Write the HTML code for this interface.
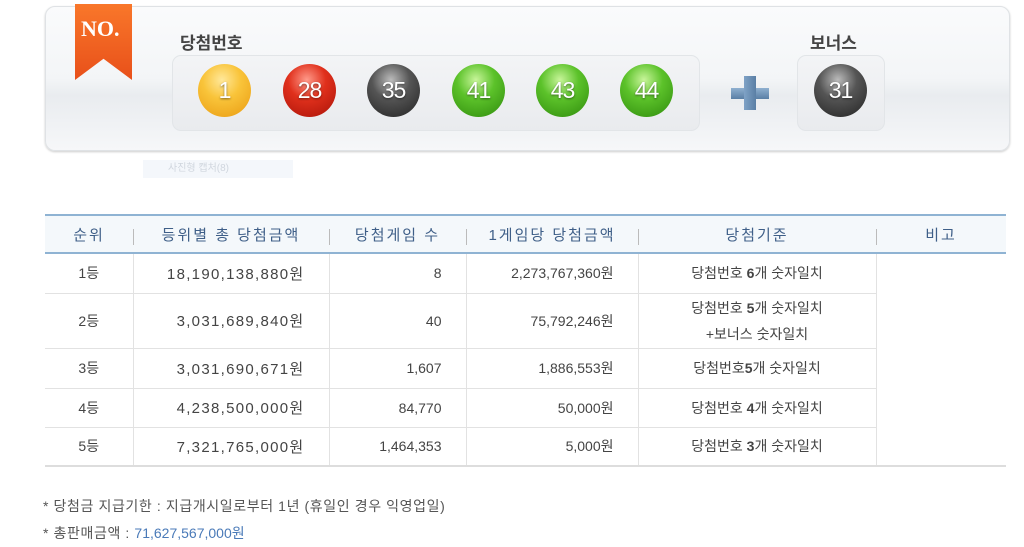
<!DOCTYPE html>
<html><head><meta charset="utf-8"><style>
*{margin:0;padding:0;box-sizing:border-box}
body{width:1024px;height:547px;background:#fff;position:relative;overflow:hidden;font-family:"Liberation Sans","Noto Sans CJK KR",sans-serif;color:#444}
.box{position:absolute;left:45px;top:6px;width:965px;height:145px;border-radius:10px;border:1px solid #dfe2e5;background:linear-gradient(#fafbfc 0%,#f3f5f7 50%,#e9ecef 62%,#f6f7f9 100%);box-shadow:0 1px 2px #ccc}
.rib{position:absolute;left:75px;top:4px;width:57px;height:76px;background:linear-gradient(#f9772a,#e8501a);clip-path:polygon(0 0,100% 0,100% 100%,50% 72%,0 100%)}
.rib span{position:absolute;left:6px;top:12px;color:#fff;font:bold 22px "Liberation Serif",serif}
.lbl{position:absolute;font-weight:bold;font-size:17px;color:#444}
.inner{position:absolute;border-radius:9px;border:1px solid #e2e5e8;background:linear-gradient(#f3f4f6,#e9ebee)}
.ball{position:absolute;width:53px;height:53px;border-radius:50%;color:#fff;font-size:23px;text-align:center;line-height:53px;text-shadow:0 1px 2px rgba(0,0,0,.5);letter-spacing:-1px}
.y{background:radial-gradient(circle at 45% 30%,#ffe89a 0%,#f9c43a 40%,#e99a10 100%)}
.r{background:radial-gradient(circle at 45% 30%,#ff9a8a 0%,#e0301c 40%,#a81208 100%)}
.k{background:radial-gradient(circle at 45% 30%,#bbb 0%,#555 40%,#222 100%)}
.g{background:radial-gradient(circle at 45% 30%,#c8f59a 0%,#5cc22a 40%,#2e8a0c 100%)}
.plus{position:absolute;left:731px;top:76px;width:38px;height:34px}
.plus:before{content:"";position:absolute;left:0;top:12px;width:38px;height:11px;background:linear-gradient(#8fb0d0,#5a7fa5)}
.plus:after{content:"";position:absolute;left:13px;top:0;width:12px;height:34px;background:linear-gradient(90deg,#7fa2c6,#5a7fa5)}
table{position:absolute;left:45px;top:214px;width:961px;border-collapse:collapse;font-size:14px}
th{height:38px;background:#f4f8fb;color:#3f5f88;font-weight:normal;border-top:2px solid #8fb3d3;border-bottom:2px solid #8fb3d3;font-size:15px;letter-spacing:2px;position:relative}
th+th:before{content:"";position:absolute;left:0;top:13px;height:16px;border-left:1px solid #bbb}
td{border-bottom:1px solid #e2e2e2;border-right:1px solid #e2e2e2;color:#444}
td.last{border-right:none;border-left:1px solid #e2e2e2}
tr:last-child td{border-bottom:2px solid #ddd}
.c{text-align:center}.rt{text-align:right;padding-right:24px}
.w{letter-spacing:1.3px;padding-right:24px;font-size:15px}
.note{position:absolute;left:43px;font-size:14px;color:#555;letter-spacing:.6px}
</style></head><body>
<div class="box"></div>
<div class="rib"><span>NO.</span></div>
<div class="lbl" style="left:180px;top:29px">당첨번호</div>
<div class="lbl" style="left:810px;top:29px">보너스</div>
<div class="inner" style="left:172px;top:55px;width:528px;height:76px"></div>
<div class="inner" style="left:797px;top:55px;width:88px;height:76px"></div>
<div class="ball y" style="left:198px;top:64px">1</div>
<div class="ball r" style="left:283px;top:64px">28</div>
<div class="ball k" style="left:367px;top:64px">35</div>
<div class="ball g" style="left:452px;top:64px">41</div>
<div class="ball g" style="left:536px;top:64px">43</div>
<div class="ball g" style="left:620px;top:64px">44</div>
<div class="plus"></div>
<div class="ball k" style="left:814px;top:64px">31</div>
<div style="position:absolute;left:143px;top:160px;width:150px;height:18px;background:#f4f7fb;color:#d0d6de;font-size:10px;padding-left:25px;line-height:18px">사진형 캡처(8)</div>
<table>
<tr><th style="width:88px">순위</th><th style="width:196px">등위별 총 당첨금액</th><th style="width:137px">당첨게임 수</th><th style="width:172px">1게임당 당첨금액</th><th style="width:238px">당첨기준</th><th>비고</th></tr>
<tr style="height:40px"><td class="c">1등</td><td class="rt w">18,190,138,880원</td><td class="rt">8</td><td class="rt">2,273,767,360원</td><td class="c">당첨번호 <b>6</b>개 숫자일치</td><td class="last" rowspan="5" style="border-bottom:2px solid #ddd"></td></tr>
<tr style="height:55px"><td class="c">2등</td><td class="rt w">3,031,689,840원</td><td class="rt">40</td><td class="rt">75,792,246원</td><td class="c" style="line-height:26px">당첨번호 <b>5</b>개 숫자일치<br>+보너스 숫자일치</td></tr>
<tr style="height:40px"><td class="c">3등</td><td class="rt w">3,031,690,671원</td><td class="rt">1,607</td><td class="rt">1,886,553원</td><td class="c">당첨번호<b>5</b>개 숫자일치</td></tr>
<tr style="height:39px"><td class="c">4등</td><td class="rt w">4,238,500,000원</td><td class="rt">84,770</td><td class="rt">50,000원</td><td class="c">당첨번호 <b>4</b>개 숫자일치</td></tr>
<tr style="height:39px"><td class="c">5등</td><td class="rt w">7,321,765,000원</td><td class="rt">1,464,353</td><td class="rt">5,000원</td><td class="c">당첨번호 <b>3</b>개 숫자일치</td></tr>
</table>
<div class="note" style="top:496px">* 당첨금 지급기한 : 지급개시일로부터 1년 (휴일인 경우 익영업일)</div>
<div class="note" style="top:523px">* 총판매금액 : <span style="color:#4a7ab8;letter-spacing:0">71,627,567,000원</span></div>
</body></html>
